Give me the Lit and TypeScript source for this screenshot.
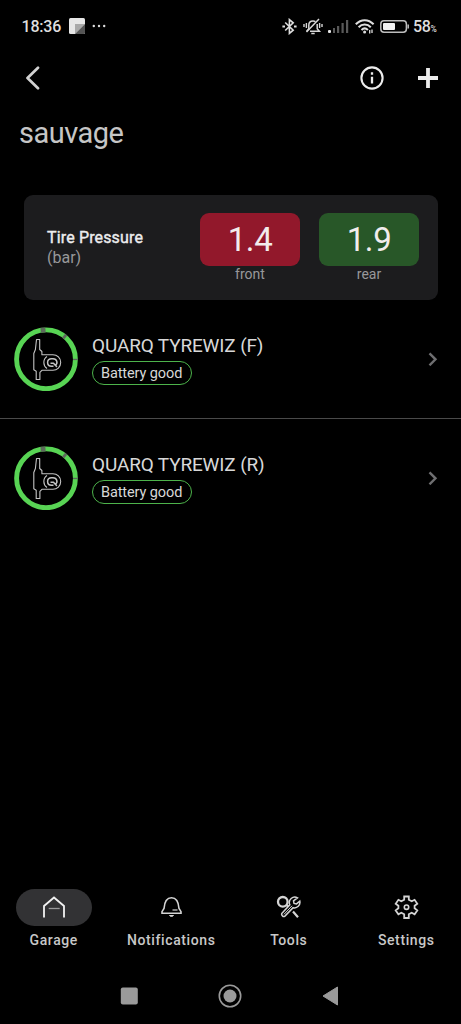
import { LitElement, html, css, svg } from 'lit';
import { customElement, property } from 'lit/decorators.js';

@customElement('status-bar')
export class StatusBar extends LitElement {
  render() {
    return html`
      <div class="bar">
        <span class="time">18:36</span>
        <svg class="note" width="16" height="16" viewBox="0 0 16 16">
          <rect width="16" height="16" rx="1.5" fill="#e6e6e6" />
          <path d="M6 6h10L6 16z" fill="#a8a8a8" />
          <path d="M16 6v8.5a1.5 1.5 0 0 1-1.5 1.5H6z" fill="#555" />
        </svg>
        <svg class="dots" width="14" height="4" viewBox="0 0 14 4" fill="#ddd">
          <circle cx="1.8" cy="2" r="1.2" />
          <circle cx="7" cy="2" r="1.2" />
          <circle cx="12.2" cy="2" r="1.2" />
        </svg>
        <div class="icons">
          <svg width="15" height="17" viewBox="0 0 15 17" fill="none" stroke="#dedede" stroke-width="1.6">
            <path d="M3.2 4.5l8 7.6-3.8 3.3V1.6l3.8 3.3-8 7.6" />
            <path d="M.4 8.5h2.6M12 8.5h2.6" stroke-width="2.2" />
          </svg>
          <svg width="20" height="17" viewBox="0 0 20 17" fill="none" stroke="#d6d6d6" stroke-width="1.5">
            <path d="M3.6 13.2l2.2-2.5V7.2c0-2.7 1.8-4.3 4.2-4.3 1 0 1.8.3 2.4.8M14.2 6v4.7l2.2 2.5H7" />
            <path d="M8.3 15.6h3.4M16 1L3.5 14" />
            <path d="M3.4 5v5M1 6v3M16.6 5v5M19 6v3" stroke-width="1.4" />
          </svg>
          <svg width="21" height="13" viewBox="0 0 21 13">
            <rect y="10" width="3" height="3" rx="1" fill="#e6e6e6" />
            <g fill="#595959">
              <rect x="5" y="8" width="2" height="5" />
              <rect x="9" y="6" width="2.2" height="7" />
              <rect x="13.5" y="3" width="2.2" height="10" />
              <rect x="18" y="0" width="2.2" height="13" />
            </g>
          </svg>
          <svg width="20" height="15" viewBox="0 0 20 15" fill="none" stroke="#dedede" stroke-width="2">
            <path d="M.8 5.3C6-.2 13.4-.2 18.6 5.3M3.6 8.3c3.5-3.7 8.7-3.7 12.2 0M6.5 11c2-2 4.4-2 6.4 0" />
            <circle cx="9.6" cy="13" r="1.5" fill="#dedede" stroke="none" />
            <path d="M14.7 11v3.5M17 10.5V14" stroke-width="1.3" />
          </svg>
          <svg width="30" height="13" viewBox="0 0 30 13">
            <rect x=".8" y=".8" width="25.6" height="11.4" rx="3.2" fill="none" stroke="#bdbdbd" stroke-width="1.5" />
            <rect x="3" y="3" width="12" height="7" rx="1" fill="#f2f2f2" />
            <path d="M28.2 4.5v4" stroke="#bdbdbd" stroke-width="1.5" />
          </svg>
        </div>
        <span class="percent">58<small>%</small></span>
      </div>
    `;
  }

  static styles = css`
    :host {
      display: block;
    }

    .bar {
      display: flex;
      align-items: center;
      height: 52px;
      padding: 0 24px 0 21.5px;
      box-sizing: border-box;
      color: #dedede;
    }

    .time {
      width: 47.5px;
      font-size: 16px;
      font-weight: 500;
      letter-spacing: -0.2px;
      padding-top: 1px;
    }

    .dots {
      margin-left: 7px;
    }

    .icons {
      display: flex;
      align-items: center;
      gap: 5.5px;
      margin-left: auto;
    }

    .percent {
      display: flex;
      align-items: baseline;
      font-size: 16px;
      font-weight: 500;
      letter-spacing: -0.4px;
      width: 24px;
      margin-left: 3px;
      padding-top: 1px;
    }

    small {
      font-size: 8.5px;
    }
  `;
}

@customElement('pressure-card')
export class PressureCard extends LitElement {
  private readings = [
    { value: '1.4', wheel: 'front', level: 'low' },
    { value: '1.9', wheel: 'rear', level: 'ok' },
  ];

  render() {
    return html`
      <section class="card">
        <div class="label">
          <div class="name">Tire Pressure</div>
          <div class="unit">(bar)</div>
        </div>
        ${this.readings.map(
          (reading) => html`
            <div class="reading">
              <div class="value ${reading.level}">${reading.value}</div>
              <div class="wheel">${reading.wheel}</div>
            </div>
          `,
        )}
      </section>
    `;
  }

  static styles = css`
    .card {
      display: flex;
      gap: 19px;
      height: 105.5px;
      padding: 18px 19px 0 23.5px;
      box-sizing: border-box;
      border-radius: 9px;
      background: #1c1c1e;
    }

    .label {
      flex: 1;
      padding-top: 15.5px;
      font-size: 16px;
      line-height: 19.5px;
    }

    .name {
      color: #ececee;
      letter-spacing: 0.15px;
      -webkit-text-stroke: 0.4px #ececee;
    }

    .unit {
      color: #98989a;
    }

    .reading {
      width: 100px;
      text-align: center;
    }

    .value {
      height: 53px;
      border-radius: 9px;
      color: #f2ecec;
      font-size: 33px;
      line-height: 53px;
      letter-spacing: -0.4px;
    }

    .low {
      background: #92182b;
    }

    .ok {
      background: #285728;
    }

    .wheel {
      color: #98989a;
      font-size: 14px;
      line-height: 17px;
    }
  `;
}

@customElement('device-row')
export class DeviceRow extends LitElement {
  @property({ type: String })
  name = '';

  @property({ type: String })
  battery = '';

  render() {
    return html`
      <div class="row">
        <svg width="64" height="64" viewBox="0 0 64 64" fill="none">
          <circle cx="32" cy="32.3" r="29.4" stroke="#58d454" stroke-width="4.9" />
          <g stroke="#5d6a5b" stroke-width="5">
            <path d="M26.7 3.3l4.8-.4" />
            <path d="M49.6 8.6l2.2 1.8" />
            <path d="M61.5 31.8v1.3" />
          </g>
          <g stroke="#c4c4c4" stroke-width="1.1" stroke-linejoin="round">
            <path d="M22.5 12.5h3.2v10l2.2 2v3.2h11a7.7 7.7 0 0 1 0 15.6h-11l-2 2v7.2h-3.7v-8.2l-2.4-1.5V26.5l1.6-4z" />
            <path d="M33 29.5c-4.2 2.8-4.2 9.2 0 12" />
            <path d="M39.5 39.3h-2c-5.2 0-5.2-7.6 0-7.6h1.5c4.2 0 5 4.6 2.5 6.3l1.3 2M36.5 36.2h3l2 2.3" stroke-width="1.5" />
          </g>
        </svg>
        <div class="info">
          <div class="name">${this.name}</div>
          <div class="badge">${this.battery}</div>
        </div>
        <svg width="10" height="14" viewBox="0 0 10 14" fill="none" stroke="#6e6e70" stroke-width="2.4">
          <path d="M1.5 1.3l6 6-6 6" />
        </svg>
      </div>
    `;
  }

  static styles = css`
    :host {
      display: block;
    }

    .row {
      display: flex;
      align-items: center;
      height: 118px;
      padding: 0 23px 0 14px;
    }

    .info {
      display: flex;
      flex-direction: column;
      align-items: flex-start;
      flex: 1;
      margin-left: 14px;
      padding-bottom: 1px;
    }

    .name {
      color: #d8d8d8;
      font-size: 19px;
      line-height: 25px;
      letter-spacing: -0.15px;
      margin-bottom: 3px;
    }

    .badge {
      height: 24px;
      padding: 0 8.5px 0 8px;
      box-sizing: border-box;
      border: 1px solid #4db34b;
      border-radius: 12px;
      color: #d8d8d8;
      font-size: 14.5px;
      line-height: 23px;
      letter-spacing: -0.1px;
    }
  `;
}

@customElement('tab-bar')
export class TabBar extends LitElement {
  @property({ type: String })
  current = 'garage';

  private tabs = [
    {
      key: 'garage',
      label: 'Garage',
      icon: svg`
        <path d="M3 22.5V11L13 2.500 23 11v11.5" stroke-width="1.8" />
        <path d="M7.7 13.500h11" stroke="#99999b" stroke-width="1.3" />
      `,
    },
    {
      key: 'notifications',
      label: 'Notifications',
      icon: svg`
        <path d="M3 18.3h19v-1.6l-2-3.2C19.5 7 17 2.8 12.5 2.8S5.5 7 5 13.5l-2 3.2z" stroke-width="1.6" />
        <path d="M13.5 15h5" stroke-width="1.2" />
        <path d="M10.5 20.5c.8 1.2 3.2 1.2 4 0z" fill="#d4d4d4" stroke-width="1" />
      `,
    },
    {
      key: 'tools',
      label: 'Tools',
      icon: svg`
        <circle cx="6.8" cy="6.8" r="4.8" stroke-width="2.3" />
        <path d="M10.5 10l2 1.8M17 16.5l5 5.7" stroke-width="2.2" />
        <path d="M21.5 2.8a5.5 5.5 0 0 0-7.7 7L6.2 18c-1.5 1.6.9 4.6 2.7 3.1l8.2-8.4a5.5 5.5 0 0 0 6.7-6.5l-3.3 2.7-2.5-.5-.5-2.5z" stroke-width="1.5" />
        <path d="M8 19.3l8-8.5" stroke-width="1" />
      `,
    },
    {
      key: 'settings',
      label: 'Settings',
      icon: svg`
        <path d="M10.2 1.5h4.6v3.2l2.9 1.6 2.9-1.5 2.7 3.9-2.7 2.1v2.5l2.7 2.1-2.7 3.9-2.9-1.5-2.9 1.5V23h-4.6v-3.7l-2.9-1.5-2.9 1.5-2.7-3.9 2.7-2.1v-2.5L1.7 8.7l2.7-3.9 2.9 1.5 2.9-1.6z" stroke-width="1.8" />
        <circle cx="12.5" cy="12.2" r="2.2" stroke-width="1.6" />
      `,
    },
  ];

  render() {
    return html`
      <nav>
        ${this.tabs.map(
          (tab) => html`
            <div class="tab">
              <div class="pill ${this.current === tab.key ? 'active' : ''}">
                <svg width="25" height="25" viewBox="0 0 25 25" fill="none">
                  ${tab.icon}
                </svg>
              </div>
              <span>${tab.label}</span>
            </div>
          `,
        )}
      </nav>
    `;
  }

  static styles = css`
    nav {
      display: flex;
      gap: 10px;
      padding-right: 1px;
    }

    .tab {
      display: flex;
      flex: 1 1 0;
      flex-direction: column;
      align-items: center;
      color: #c8c8c8;
      font-size: 14px;
      font-weight: 500;
      line-height: 18px;
      letter-spacing: 0.6px;
    }

    .pill {
      display: flex;
      align-items: center;
      justify-content: center;
      width: 76px;
      height: 37px;
      margin-bottom: 5px;
      border-radius: 19px;
      stroke: #d4d4d4;
    }

    .active {
      background: #323234;
      stroke: #f2f2f2;
    }
  `;
}

@customElement('app-root')
export class AppRoot extends LitElement {
  private devices = ['QUARQ TYREWIZ (F)', 'QUARQ TYREWIZ (R)'];

  render() {
    return html`
      <status-bar></status-bar>
      <header>
        <svg width="15" height="24" viewBox="0 0 15 24" fill="none" stroke="#d2d2d2" stroke-width="2.7" stroke-linecap="round" stroke-linejoin="round">
          <path d="M13 1.8L2.5 12 13 22.2" />
        </svg>
        <svg class="about" width="24" height="24" viewBox="0 0 24 24" fill="none" stroke="#ececec">
          <circle cx="12" cy="12" r="10.6" stroke-width="2.1" />
          <path d="M12 10.8v6.7M12 6.3v2.4" stroke-width="2.3" />
        </svg>
        <svg width="20" height="20" viewBox="0 0 20 20" stroke="#ececec" stroke-width="3.8">
          <path d="M10 0v20M0 10h20" />
        </svg>
      </header>
      <h1>sauvage</h1>
      <pressure-card></pressure-card>
      <main>
        ${this.devices.map(
          (name) => html`
            <device-row name=${name} battery="Battery good"></device-row>
          `,
        )}
      </main>
      <tab-bar></tab-bar>
      <footer>
        <svg width="18" height="18" viewBox="0 0 18 18">
          <rect x=".8" y=".5" width="17" height="17" rx="2" fill="#9a9a9a" />
        </svg>
        <svg width="24" height="24" viewBox="0 0 24 24">
          <circle cx="12" cy="12" r="10.7" fill="none" stroke="#9a9a9a" stroke-width="1.6" />
          <circle cx="12" cy="12" r="6.5" fill="#9a9a9a" />
        </svg>
        <svg width="17" height="20" viewBox="0 0 17 20">
          <path d="M15.5 1v18L1 10z" fill="#9a9a9a" stroke="#9a9a9a" stroke-linejoin="round" />
        </svg>
      </footer>
    `;
  }

  static styles = css`
    :host {
      display: flex;
      flex-direction: column;
      height: 1024px;
      overflow: hidden;
      background: #000;
      font-family: Roboto, 'Liberation Sans', sans-serif;
    }

    header {
      display: flex;
      align-items: center;
      height: 51px;
      padding: 0 23px 0 25px;
    }

    .about {
      margin-left: auto;
      margin-right: 34px;
    }

    h1 {
      margin: 13px 0 0 19px;
      height: 78.5px;
      color: #c6c6c6;
      font-size: 29px;
      font-weight: 400;
      line-height: 35px;
      letter-spacing: -0.5px;
    }

    pressure-card {
      display: block;
      margin: 0 23px 0 23.5px;
    }

    main {
      flex: 1;
    }

    device-row + device-row {
      border-top: 1px solid #4a4a4a;
    }

    footer {
      display: flex;
      align-items: center;
      justify-content: space-between;
      height: 56px;
      margin-top: 19px;
      padding: 0 122px 0 120px;
    }
  `;
}
